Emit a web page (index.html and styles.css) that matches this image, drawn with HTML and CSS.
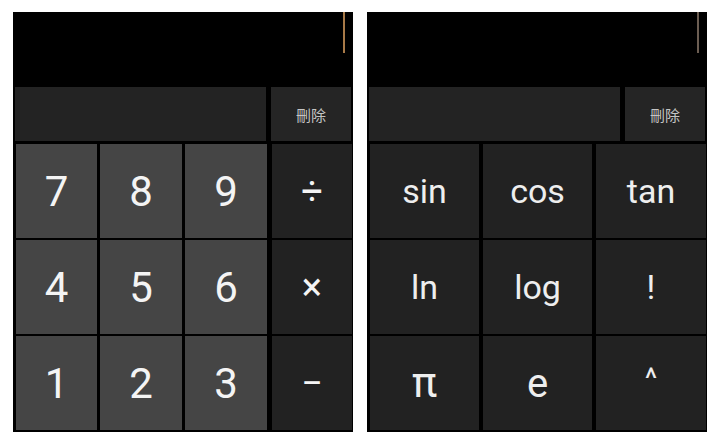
FILE: index.html
```html
<!DOCTYPE html>
<html lang="zh-Hant">
<head>
<meta charset="utf-8">
<title>Calculator</title>
<link rel="stylesheet" href="styles.css">
</head>
<body>
<div class="screens">
  <section class="panel">
    <div class="display"><span class="cursor cursor-orange"></span></div>
    <div class="edit-row">
      <div class="formula"></div>
      <div class="del">刪除</div>
    </div>
    <div class="keys keys-basic">
      <div class="key digit">7</div>
      <div class="key digit">8</div>
      <div class="key digit">9</div>
      <div class="key op">÷</div>
      <div class="key digit">4</div>
      <div class="key digit">5</div>
      <div class="key digit">6</div>
      <div class="key op">×</div>
      <div class="key digit">1</div>
      <div class="key digit">2</div>
      <div class="key digit">3</div>
      <div class="key op">−</div>
    </div>
  </section>
  <section class="panel">
    <div class="display"><span class="cursor cursor-gray"></span></div>
    <div class="edit-row">
      <div class="formula"></div>
      <div class="del">刪除</div>
    </div>
    <div class="keys keys-adv">
      <div class="key fn">sin</div>
      <div class="key fn">cos</div>
      <div class="key fn">tan</div>
      <div class="key fn">ln</div>
      <div class="key fn">log</div>
      <div class="key fn">!</div>
      <div class="key fn pi">π</div>
      <div class="key fn big-e">e</div>
      <div class="key fn caret">^</div>
    </div>
  </section>
</div>
</body>
</html>
```

FILE: styles.css
```css
html, body {
  margin: 0;
  padding: 0;
  background: #ffffff;
}

body {
  width: 720px;
  height: 432px;
  overflow: hidden;
  font-family: Roboto, "Noto Sans", sans-serif;
}

.screens {
  display: flex;
  gap: 14px;
  padding: 12px 0 0 13px;
}

.panel {
  width: 340px;
  height: 420px;
  background: #000000;
  display: flex;
  flex-direction: column;
}

.display {
  height: 75px;
  display: flex;
  justify-content: flex-end;
  align-items: flex-start;
  padding-right: 8px;
  box-sizing: border-box;
}

.cursor {
  width: 2px;
  height: 41px;
}

.cursor-orange {
  background: #a87a48;
}

.cursor-gray {
  background: #6b5d52;
}

.edit-row {
  height: 54px;
  display: flex;
  gap: 5px;
  padding: 0 2px;
}

.formula {
  flex: 1;
  background: #232323;
}

.del {
  width: 80px;
  background: #252525;
  color: #c4c4c4;
  font-family: "Noto Sans CJK TC", "Noto Sans CJK SC", sans-serif;
  font-size: 15px;
  display: flex;
  align-items: center;
  justify-content: center;
}

.keys {
  display: grid;
  grid-template-rows: 94px 94px 94px;
  row-gap: 2px;
  margin-top: 3px;
  padding-left: 3px;
}

.keys-basic {
  grid-template-columns: 81px 82px 82px 82px;
  column-gap: 3px;
}

.keys-adv {
  grid-template-columns: 109px 109px 110px;
  column-gap: 4px;
}

.key {
  display: flex;
  align-items: center;
  justify-content: center;
  color: #f4f4f4;
}

.digit {
  background: #454545;
  font-size: 42px;
}

.op {
  background: #222222;
  font-size: 38px;
  margin-left: 2px;
}

.fn {
  background: #222222;
  font-size: 34px;
  color: #eeeeee;
}

.pi {
  font-size: 42px;
  padding-bottom: 2px;
  box-sizing: border-box;
}

.big-e {
  font-size: 40px;
}

.caret {
  font-size: 30px;
  padding-bottom: 10px;
  box-sizing: border-box;
}
```
